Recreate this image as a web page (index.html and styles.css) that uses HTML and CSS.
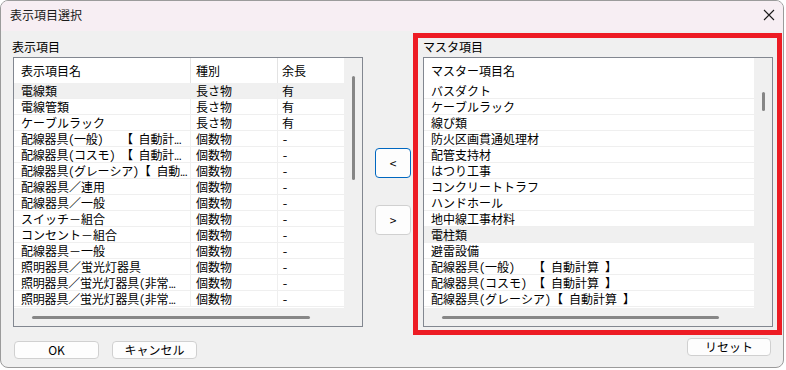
FILE: index.html
```html
<!DOCTYPE html>
<html lang="ja">
<head>
<meta charset="utf-8">
<title>表示項目選択</title>
<link rel="stylesheet" href="styles.css">
</head>
<body>
<div class="window">
  <div class="titlebar">
    <span class="title">表示項目選択</span>
    <svg class="close" width="12" height="12" viewBox="0 0 12 12"><path d="M1 1L11 11M11 1L1 11" stroke="#1b1b1b" stroke-width="1.1" fill="none"/></svg>
  </div>
  <div class="body">
    <div class="panels">
      <div class="panel left">
        <div class="label">表示項目</div>
        <div class="listbox">
          <div class="list-main">
            <div class="row header"><div class="c1">表示項目名</div><div class="c2">種別</div><div class="c3">余長</div></div>
            <div class="row sel"><div class="c1">電線類</div><div class="c2">長さ物</div><div class="c3">有</div></div>
            <div class="row"><div class="c1">電線管類</div><div class="c2">長さ物</div><div class="c3">有</div></div>
            <div class="row"><div class="c1">ケーブルラック</div><div class="c2">長さ物</div><div class="c3">有</div></div>
            <div class="row"><div class="c1 tight">配線器具(一般)　　【 自動計<span class="ell">...</span></div><div class="c2">個数物</div><div class="c3">-</div></div>
            <div class="row"><div class="c1 tight">配線器具(コスモ)　【 自動計<span class="ell">...</span></div><div class="c2">個数物</div><div class="c3">-</div></div>
            <div class="row"><div class="c1 tight">配線器具(グレーシア)【 自動<span class="ell">...</span></div><div class="c2">個数物</div><div class="c3">-</div></div>
            <div class="row"><div class="c1">配線器具／連用</div><div class="c2">個数物</div><div class="c3">-</div></div>
            <div class="row"><div class="c1">配線器具／一般</div><div class="c2">個数物</div><div class="c3">-</div></div>
            <div class="row"><div class="c1">スイッチ－組合</div><div class="c2">個数物</div><div class="c3">-</div></div>
            <div class="row"><div class="c1">コンセント－組合</div><div class="c2">個数物</div><div class="c3">-</div></div>
            <div class="row"><div class="c1">配線器具－一般</div><div class="c2">個数物</div><div class="c3">-</div></div>
            <div class="row"><div class="c1">照明器具／蛍光灯器具</div><div class="c2">個数物</div><div class="c3">-</div></div>
            <div class="row"><div class="c1 tight">照明器具／蛍光灯器具(非常<span class="ell">...</span></div><div class="c2">個数物</div><div class="c3">-</div></div>
            <div class="row"><div class="c1 tight">照明器具／蛍光灯器具(非常<span class="ell">...</span></div><div class="c2">個数物</div><div class="c3">-</div></div>
          </div>
          <div class="vscroll"><div class="vthumb vthumb-left"></div></div>
          <div class="hscroll"><div class="hthumb hthumb-left"></div></div>
          <div class="corner"></div>
        </div>
      </div>
      <div class="mid">
        <button class="btn arrow focus">&lt;</button>
        <button class="btn arrow">&gt;</button>
      </div>
      <div class="panel right">
        <div class="label">マスタ項目</div>
        <div class="listbox">
          <div class="list-main">
            <div class="row header single"><div class="c1">マスター項目名</div></div>
            <div class="row single"><div class="c1">バスダクト</div></div>
            <div class="row single"><div class="c1">ケーブルラック</div></div>
            <div class="row single"><div class="c1">線ぴ類</div></div>
            <div class="row single"><div class="c1">防火区画貫通処理材</div></div>
            <div class="row single"><div class="c1">配管支持材</div></div>
            <div class="row single"><div class="c1">はつり工事</div></div>
            <div class="row single"><div class="c1">コンクリートトラフ</div></div>
            <div class="row single"><div class="c1">ハンドホール</div></div>
            <div class="row single"><div class="c1">地中線工事材料</div></div>
            <div class="row single sel"><div class="c1">電柱類</div></div>
            <div class="row single"><div class="c1">避雷設備</div></div>
            <div class="row single"><div class="c1">配線器具(一般)　　【 自動計算 】</div></div>
            <div class="row single"><div class="c1">配線器具(コスモ)　【 自動計算 】</div></div>
            <div class="row single"><div class="c1">配線器具(グレーシア)【 自動計算 】</div></div>
          </div>
          <div class="vscroll"><div class="vthumb vthumb-right"></div></div>
          <div class="hscroll"><div class="hthumb hthumb-right"></div></div>
          <div class="corner"></div>
        </div>
      </div>
    </div>
    <div class="footer">
      <button class="btn foot ok">OK</button>
      <button class="btn foot">キャンセル</button>
      <button class="btn foot reset">リセット</button>
    </div>
  </div>
  <div class="highlight"></div>
</div>
</body>
</html>
```

FILE: styles.css
```css
* { box-sizing: border-box; }

html, body {
  margin: 0;
  padding: 0;
  background: #ffffff;
}

body {
  font-family: "Noto Sans Mono CJK JP", "Noto Sans CJK JP", "Noto Sans", sans-serif;
  font-size: 12px;
  color: #000;
}

.window {
  position: relative;
  width: 784px;
  height: 368px;
  border: 1px solid #9b9b9b;
  border-radius: 8px;
  overflow: hidden;
  background: #f0f0f0;
}

.titlebar {
  height: 30px;
  background: #f7eef3;
  display: flex;
  align-items: center;
  justify-content: space-between;
  padding: 0 8px 2px 9px;
}

.title {
  font-family: "Noto Sans CJK JP", sans-serif;
  font-size: 12px;
  line-height: 16px;
  color: #1a1a1a;
}

.close { display: block; }

.body {
  padding: 8px 10px 0 11px;
}

.panels {
  display: flex;
  gap: 12px;
}

.panel { flex-shrink: 0; }
.panel.left { width: 351px; }
.panel.right { width: 350px; }

.label {
  font-family: "Noto Sans CJK JP", sans-serif;
  height: 16px;
  line-height: 16px;
  margin-bottom: 2px;
}

.panel.left .listbox { margin-left: 1px; }

.listbox {
  width: 350px;
  height: 270px;
  border: 1px solid #828790;
  display: grid;
  grid-template-columns: 330px 18px;
  grid-template-rows: 250px 18px;
  background: #f0f0f0;
}

.list-main {
  background: #ffffff;
  overflow: hidden;
}

.row {
  display: grid;
  grid-template-columns: 176px 87px 1fr;
  height: 16px;
  border-bottom: 1px solid #efefef;
  line-height: 15px;
  white-space: nowrap;
}

.row.single { grid-template-columns: 1fr; }

.row.header {
  height: 25px;
  line-height: 25px;
  border-bottom: none;
}

.row.sel { background: #f0f0f0; }

.c1 { padding-left: 7px; }
.c1.tight { letter-spacing: -0.2px; }
.c2 { padding-left: 5px; border-left: 1px solid #efefef; }
.c3 { padding-left: 4px; border-left: 1px solid #efefef; }
.row.header .c2, .row.header .c3 { border-left-color: #e3e3e3; }

.ell {
  font-family: "Noto Sans", sans-serif;
  font-size: 11px;
  line-height: 12px;
  letter-spacing: -0.6px;
}

.vscroll, .hscroll, .corner {
  position: relative;
  background: #f0f0f0;
}

.vthumb {
  position: absolute;
  left: 8px;
  width: 3px;
  border-radius: 2px;
  background: #868686;
}
.vthumb-left { top: 18px; height: 104px; }
.vthumb-right { top: 34px; height: 19px; }

.hthumb {
  position: absolute;
  top: 8px;
  left: 18px;
  height: 3px;
  border-radius: 2px;
  background: #868686;
}
.hthumb-left { width: 278px; }
.hthumb-right { width: 277px; }

.mid {
  width: 36px;
  flex-shrink: 0;
  display: flex;
  flex-direction: column;
  gap: 27px;
  padding-top: 109px;
}

.btn {
  font-family: "Noto Sans CJK JP", "Noto Sans", sans-serif;
  font-size: 12px;
  color: #000;
  background: #fdfdfd;
  border: 1px solid #d0d0d0;
  border-radius: 4px;
  padding: 0;
  margin: 0;
}

.arrow {
  width: 36px;
  height: 30px;
  line-height: 28px;
}

.arrow.focus { border-color: #0067c0; }

.footer {
  display: flex;
  align-items: flex-start;
  margin-top: 11px;
  padding-left: 2px;
}

.foot {
  width: 85px;
  height: 18px;
  line-height: 16px;
  margin-top: 3px;
}

.foot.ok { margin-right: 13px; }

.foot.reset {
  width: 84px;
  margin-left: auto;
  margin-top: 0;
  margin-right: 2px;
}

.highlight {
  position: absolute;
  left: 412px;
  top: 32px;
  width: 369px;
  height: 302px;
  border: 5px solid #ed1c24;
  pointer-events: none;
}
```
